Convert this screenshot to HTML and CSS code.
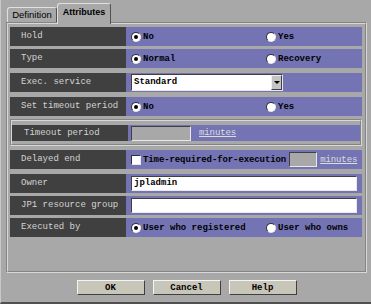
FILE: index.html
```html
<!DOCTYPE html>
<html lang="en">
<head>
  <meta charset="UTF-8" />
  <title>Attributes</title>
  <link rel="stylesheet" href="styles.css">
</head>
<body>
  <div class="dialog">
    <div class="tabs">
      <div class="tab">Definition</div>
      <div class="tab active">Attributes</div>
    </div>
    <div class="panel">
      <div class="row">
        <div class="label">Hold</div>
        <div class="value">
          <span class="opt first"><span class="radio on"></span>No</span>
          <span class="opt"><span class="radio"></span>Yes</span>
        </div>
      </div>
      <div class="row">
        <div class="label">Type</div>
        <div class="value">
          <span class="opt first"><span class="radio on"></span>Normal</span>
          <span class="opt"><span class="radio"></span>Recovery</span>
        </div>
      </div>
      <div class="row sp">
        <div class="label">Exec. service</div>
        <div class="value">
          <div class="select"><span class="sel-text">Standard</span><span class="arrow"></span></div>
        </div>
      </div>
      <div class="row sp">
        <div class="label">Set timeout period</div>
        <div class="value">
          <span class="opt first"><span class="radio on"></span>No</span>
          <span class="opt"><span class="radio"></span>Yes</span>
        </div>
      </div>
      <div class="group">
        <div class="row inner">
          <div class="label">Timeout period</div>
          <div class="value">
            <span class="field off"></span>
            <span class="unit">minutes</span>
          </div>
        </div>
      </div>
      <div class="row dl">
        <div class="label">Delayed end</div>
        <div class="value">
          <span class="check"></span>
          <span class="cb-text">Time-required-for-execution</span>
          <span class="field off small"></span>
          <span class="unit">minutes</span>
        </div>
      </div>
      <div class="row sp">
        <div class="label">Owner</div>
        <div class="value"><span class="field wide">jpladmin</span></div>
      </div>
      <div class="row">
        <div class="label">JP1 resource group</div>
        <div class="value"><span class="field wide"></span></div>
      </div>
      <div class="row">
        <div class="label">Executed by</div>
        <div class="value">
          <span class="opt first"><span class="radio on"></span>User who registered</span>
          <span class="opt"><span class="radio"></span>User who owns</span>
        </div>
      </div>
    </div>
    <div class="buttons">
      <button class="btn">OK</button>
      <button class="btn">Cancel</button>
      <button class="btn">Help</button>
    </div>
  </div>
</body>
</html>
```
FILE: styles.css
```css
body {
  margin: 0;
  background-color: #a8a8a8;
  font-family: "Liberation Mono", monospace;
  font-size: 9px;
}

.dialog {
  width: 371px;
  height: 304px;
  box-sizing: border-box;
  padding: 3px 4px 0 5px;
  border-left: 1px solid #c8c8c8;
  border-bottom: 2px solid #505050;
}

/* tabs */
.tabs {
  display: flex;
  align-items: flex-end;
  height: 21px;
  padding-left: 1px;
  margin-bottom: -2px;
  position: relative;
  z-index: 1;
}

.tab {
  box-sizing: border-box;
  width: 50px;
  height: 15px;
  margin-bottom: 2px;
  font-family: "Liberation Sans", Arial, sans-serif;
  font-size: 9.5px;
  line-height: 14px;
  text-align: center;
  color: #000;
  background: #a8a8a8;
  border: 1px solid;
  border-color: #e0e0e0 #505050 transparent #e0e0e0;
  border-bottom: none;
  border-radius: 3px 3px 0 0;
}

.tab.active {
  width: 54px;
  height: 21px;
  margin-bottom: 0;
  font-size: 9px;
  font-weight: bold;
  line-height: 16px;
}

/* main panel */
.panel {
  box-sizing: border-box;
  height: 251px;
  border: 2px groove #d8d8d8;
  padding: 3px 3px 0 2px;
}

.row {
  display: flex;
  height: 19px;
  margin-top: 3px;
}
.row:first-child {
  margin-top: 0;
}
.row.sp {
  margin-top: 5px;
}
.row.dl {
  margin-top: 4px;
}

.label {
  box-sizing: border-box;
  width: 116px;
  padding-left: 11px;
  background-color: #404040;
  color: #d4d4d4;
  line-height: 19px;
  white-space: nowrap;
}

.value {
  flex: 1;
  display: flex;
  align-items: center;
  padding-left: 5px;
  background-color: #7474b4;
  color: #000;
  font-weight: bold;
  white-space: nowrap;
  overflow: hidden;
}

.opt {
  display: flex;
  align-items: center;
}
.opt.first {
  width: 135px;
}

.radio {
  position: relative;
  box-sizing: border-box;
  width: 10px;
  height: 10px;
  margin-right: 2px;
  border-radius: 50%;
  background: #fff;
  border: 1px solid;
  border-color: #303030 #e8e8e8 #e8e8e8 #303030;
}
.radio.on::after {
  content: "";
  position: absolute;
  left: 2px;
  top: 2px;
  width: 4px;
  height: 4px;
  border-radius: 50%;
  background: #000;
}

.select {
  display: flex;
  box-sizing: border-box;
  width: 152px;
  height: 17px;
  background: #fff;
  border: 1px solid;
  border-color: #404040 #e8e8e8 #e8e8e8 #404040;
}
.sel-text {
  flex: 1;
  padding-left: 2px;
  line-height: 14px;
}
.arrow {
  position: relative;
  box-sizing: border-box;
  width: 11px;
  background: #c4c4c4;
  border: 1px solid;
  border-color: #f0f0f0 #404040 #404040 #f0f0f0;
}
.arrow::after {
  content: "";
  position: absolute;
  left: 2px;
  top: 5px;
  border-left: 3px solid transparent;
  border-right: 3px solid transparent;
  border-top: 3px solid #000;
}

/* timeout group */
.group {
  margin-top: 3px;
  border: 2px groove #d8d8d8;
  padding: 4px 0 3px 0;
}
.row.inner {
  height: 16px;
  margin-top: 0;
}
.row.inner .label {
  padding-left: 12px;
  line-height: 16px;
}
.row.inner .value {
  padding-left: 3px;
}

.field {
  box-sizing: border-box;
  height: 15px;
  background: #fff;
  border: 1px solid;
  border-color: #404040 #e8e8e8 #e8e8e8 #404040;
  padding-left: 2px;
  line-height: 13px;
}
.field.off {
  width: 60px;
  background: #a8a8a8;
}
.field.small {
  width: 28px;
  margin-left: 3px;
}
.field.wide {
  width: 226px;
}

.cb-text {
  letter-spacing: -0.1px;
}

.unit {
  margin-left: 8px;
  color: #dcdcdc;
  font-weight: normal;
  text-decoration: underline;
  letter-spacing: -0.1px;
}
.field.small + .unit {
  margin-left: 3px;
}

.check {
  box-sizing: border-box;
  width: 10px;
  height: 10px;
  margin-right: 2px;
  background: #fff;
  border: 1px solid;
  border-color: #303030 #e8e8e8 #e8e8e8 #303030;
}

/* buttons */
.buttons {
  display: flex;
  justify-content: center;
  gap: 8px;
  margin-top: 7px;
}

.btn {
  box-sizing: border-box;
  width: 68px;
  height: 15px;
  padding: 0;
  background-color: #c8c5b9;
  border: 1px solid;
  border-color: #f4f4f4 #404040 #404040 #f4f4f4;
  font-family: "Liberation Mono", monospace;
  font-size: 9px;
  font-weight: bold;
  color: #000;
}
```
